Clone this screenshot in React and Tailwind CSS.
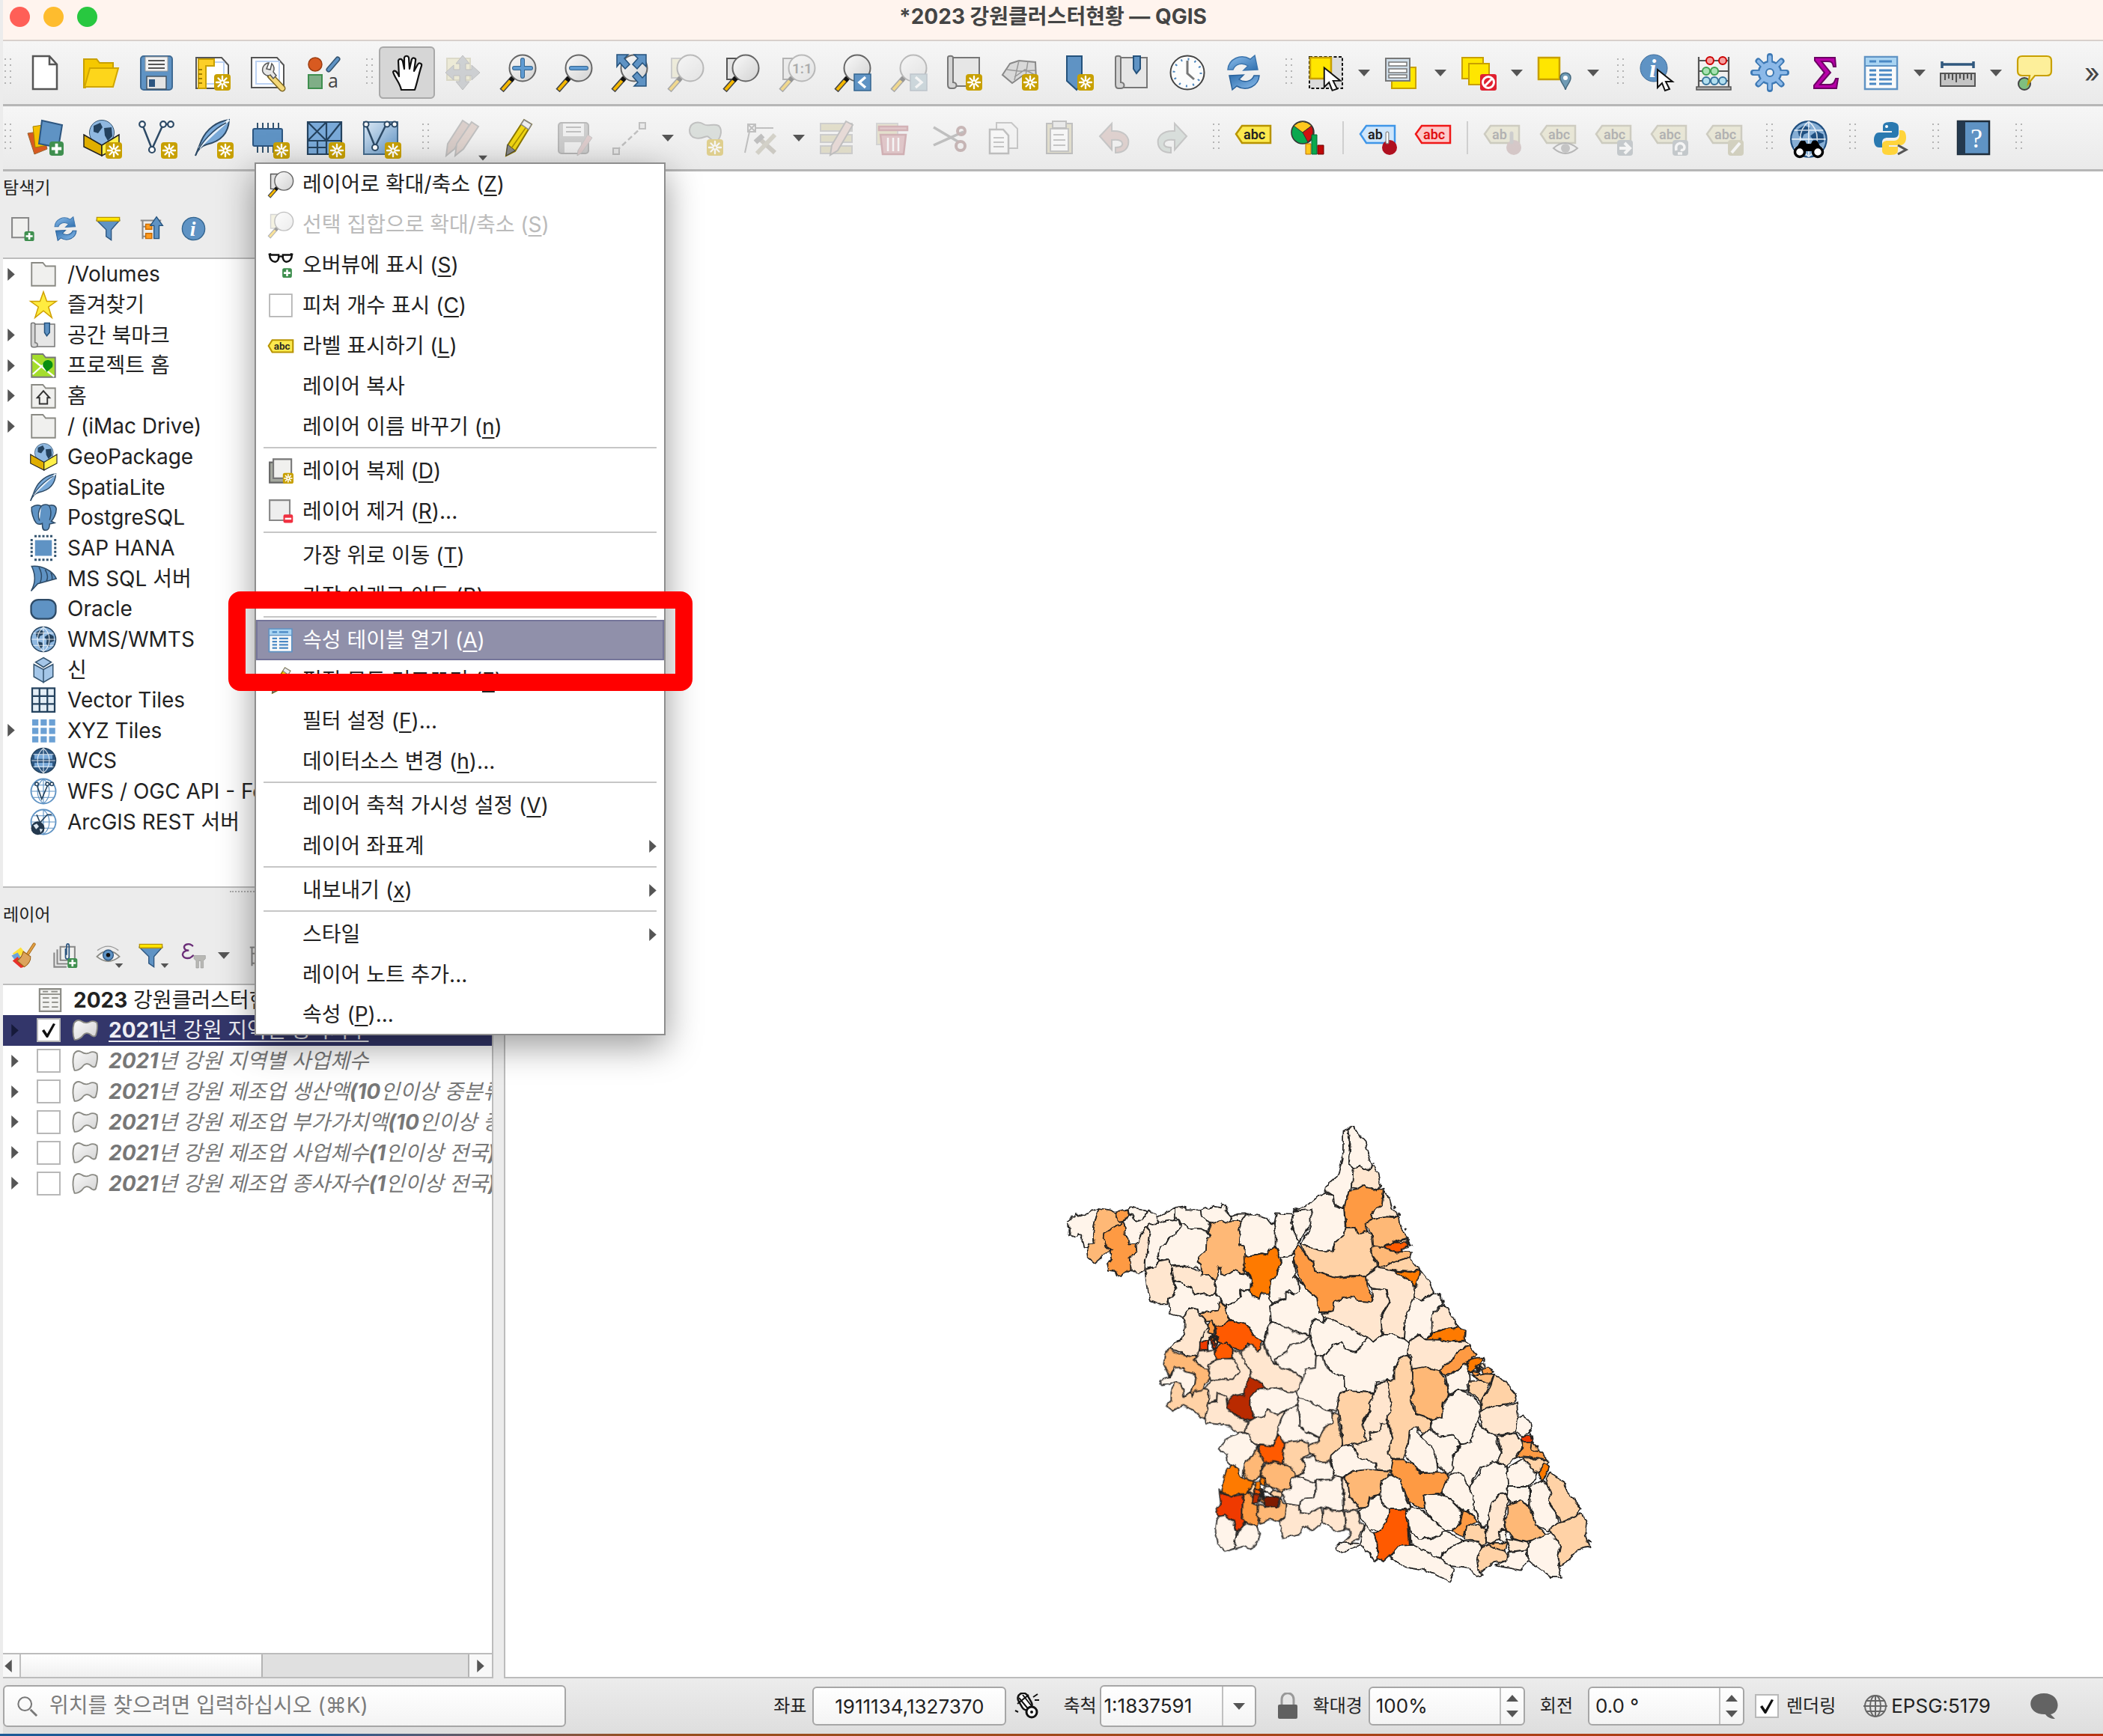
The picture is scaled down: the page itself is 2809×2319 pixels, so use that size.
import { Fragment, useState } from 'react';
import clsx from 'clsx';

const INK = '#222';

function Star({ x = 26, y = 26, s = 22 }) {
    return (
        <g transform={`translate(${x} ${y}) scale(${s / 22})`}>
            <rect width="22" height="22" rx="4" fill="#c8a000" />
            <path d="M11 3v16M3 11h16M5.500 5.500l11 11M16.500 5.500l-11 11" stroke="#fff" strokeWidth="2.400" strokeLinecap="round" />
            <circle cx="11" cy="11" r="1.600" fill="#c8a000" />
        </g>
    );
}

function Plus({ x = 28, y = 28, s = 20 }) {
    return (
        <g transform={`translate(${x} ${y}) scale(${s / 20})`}>
            <rect width="20" height="20" rx="4" fill="#3f8f4f" />
            <path d="M10 3v14M3 10h14" stroke="#fff" strokeWidth="4" />
        </g>
    );
}

function Lens({ children }) {
    return (
        <g>
            <path d="M17 31L2 48" stroke="#444" strokeWidth="7" />
            <path d="M14 34.500L3 47" stroke="#f5b800" strokeWidth="4" />
            <path d="M18 30l-4 5" stroke="#111" strokeWidth="6" />
            <circle cx="30" cy="18" r="17.500" fill="url(#glass)" stroke="#666" strokeWidth="2" />
            {children}
        </g>
    );
}

function Tag({ fill = '#fce94f', line = '#b89400', text = 'abc', color = '#222' }) {
    return (
        <g>
            <path d="M1 19L9 8h38v23H9z" fill={fill} stroke={line} strokeWidth="2.500" />
            <text x="11" y="26" fontSize="18" fontWeight="600" fontFamily="Roboto, sans-serif" fill={color}>{text}</text>
        </g>
    );
}

function Globe({ land = '#24425e', sea = '#8fb8e0' }) {
    return (
        <g>
            <circle cx="24" cy="24" r="22" fill={sea} stroke={land} strokeWidth="2" />
            <path d="M10 12l8-5 8 3-3 6-5 2-2 5-4-3zM26 20l8-6 8 4 1 9-7 3-2 8-5-6 1-6zM15 28l7 2 1 6-5 6-3-7z" fill={land} />
        </g>
    );
}

function Grid() {
    return <path d="M24 2v44M3 24h42M6 13h36M6 35h36M24 2c-14 11-14 33 0 44M24 2c14 11 14 33 0 44" fill="none" stroke="#fff" strokeWidth="1.500" opacity=".8" />;
}

const cursor = 'M22 20v24l6-6 4 10 6-2-5-10h9z';
const blueArrow = 'M3 20C4 6 20-2 33 6l6-5 4 19-19 1 6-6c-7-5-17-3-20 5z';

const ICONS = {
    newFile: <path d="M8 2h22l10 11v33H8zM30 2v11h10" fill="#fff" stroke="#555" strokeWidth="2.500" />,
    open: <><path d="M1 6h17l4 5h18v8H12L3 44H1z" fill="#f5c800" stroke="#c8a000" strokeWidth="2" /><path d="M9 18h38l-7 25H2z" fill="#fdd61b" stroke="#d0a600" strokeWidth="2" /></>,
    save: <><rect x="3" y="2" width="42" height="45" rx="4" fill="#5f93c4" stroke="#3f6a94" strokeWidth="2" /><path d="M9 3h30v19H9z" fill="#f3f3f3" stroke="#999" /><path d="M13 8h22M13 13h22M13 18h22" stroke="#555" strokeWidth="2" /><path d="M11 29h26v17H11z" fill="#e4e4e4" stroke="#456" strokeWidth="1.500" /><path d="M14 33h8v10h-8z" fill="#2d5680" /></>,
    layout: <><path d="M2 4h34l9 10v31H2z" fill="#fff" stroke="#555" strokeWidth="2" /><path d="M8 10h31v29H8z" fill="none" stroke="#bcd2f3" strokeWidth="2" /><path d="M5 6h21v9H15v30H5z" fill="#fdcf28" stroke="#c8a000" strokeWidth="2" /><path d="M5 20h5M5 26h5M5 32h5M5 38h5" stroke="#a27f00" strokeWidth="2" /><Star /></>,
    layoutManager: <><path d="M2 4h34l9 10v30H2z" fill="#fff" stroke="#555" strokeWidth="2" /><path d="M8 9h31v30H8z" fill="none" stroke="#bcd2f3" strokeWidth="2" /><path d="M27 28l16 17" stroke="#7a6420" strokeWidth="9" strokeLinecap="round" /><path d="M28 29l15 16" stroke="#f4d878" strokeWidth="6" strokeLinecap="round" /><path d="M25 11c-4 0-10 5-8 12 2 5 7 6 10 4l4 5 4-4-4-5c2-4 1-8-2-11l-2 8-5-1z" fill="#e6e6e6" stroke="#555" strokeWidth="1.500" /></>,
    style: <><ellipse cx="12" cy="13" rx="9" ry="9" fill="#d85a20" stroke="#9c3c10" strokeWidth="1.500" /><path d="M42 6L30 20" stroke="#33536f" strokeWidth="7" strokeLinecap="round" /><path d="M42 6L30 20" stroke="#5f93c4" strokeWidth="4" strokeLinecap="round" /><path d="M3 27h18v18H3z" fill="#7fae87" stroke="#3f8f4f" strokeWidth="2" /><text x="29" y="44" fontSize="25" fontFamily="Open Sans, sans-serif" fill="#444">a</text></>,
    hand: <path d="M15 46c-2-10-9-16-11-24 2-3 5-1 8 6L11 7c1-3 5-3 6 1l2 10V3c1-3 5-3 6 0l1 15 3-13c2-3 6-1 5 2l-2 14 5-9c2-3 6-1 5 2-3 8-5 20-9 32z" fill="#fff" stroke="#111" strokeWidth="2.200" strokeLinejoin="round" transform="translate(2 1)" />,
    panSelect: <><path d="M3 5h31v29H3z" fill="#e5dfae" stroke="#bbb68c" strokeWidth="2" /><path d="M24 1l9 11h-5v8h8v-6l11 10-11 10v-6h-8v8h5l-9 11-9-11h5v-8h-8v6L1 24l11-10v6h8v-8h-5z" fill="#9aa0a6" stroke="#777" /></>,
    zoomIn: <Lens><path d="M30 7v22M19 18h22" stroke="#33648f" strokeWidth="6" strokeLinecap="round" /><path d="M30 7v22M19 18h22" stroke="#5f9bd2" strokeWidth="4" strokeLinecap="round" /></Lens>,
    zoomOut: <Lens><path d="M20 18h20" stroke="#33648f" strokeWidth="6" strokeLinecap="round" /><path d="M20 18h20" stroke="#5f9bd2" strokeWidth="4" strokeLinecap="round" /></Lens>,
    zoomFull: <><Lens /><path d="M7 0h15l-5 5 7 8-6 6-7-8-4 5zM46 0v16l-5-5-7 8-6-6 7-8-5-5zM46 42H30l5-5-7-8 6-6 7 8 5-5z" fill="#5f93c4" stroke="#24527c" strokeWidth="1.500" /></>,
    zoomSel: <><path d="M5 5h26v26H5z" fill="#e6e1b8" stroke="#999" strokeWidth="2" /><Lens /></>,
    zoomLayer: <><path d="M5 5h26v28H5z" fill="#e2e2e2" stroke="#555" strokeWidth="2" /><Lens /></>,
    zoomNative: <><path d="M5 5h26v28H5z" fill="#e2e2e2" stroke="#555" strokeWidth="2" /><Lens><text x="17" y="25" fontSize="19" fontWeight="600" fontFamily="Roboto, sans-serif" fill="#444">1:1</text></Lens></>,
    zoomLast: <><Lens /><path d="M26 26h22v22H26z" fill="#5f93c4" stroke="#33648f" strokeWidth="1.500" /><path d="M41 30l-8 7 8 7" fill="none" stroke="#fff" strokeWidth="3.500" /></>,
    zoomNext: <><Lens /><path d="M26 26h22v22H26z" fill="#9ab4bf" stroke="#789" strokeWidth="1.500" /><path d="M33 30l8 7-8 7" fill="none" stroke="#fff" strokeWidth="3.500" /></>,
    newMap: <><path d="M8 4h36v38H8z" fill="#e6e6e6" stroke="#777" strokeWidth="2" /><path d="M2 4c0-3 7-3 7 0v33c6 0 6 8 0 8H6c-3 0-4-2-4-5z" fill="#d4d4d4" stroke="#777" strokeWidth="2" /><Star /></>,
    map3d: <><path d="M10 12l12-4 22 2 1 24-18-6-14 10-13-11z" fill="#d9d9d9" stroke="#888" strokeWidth="2" /><path d="M6 20l16 2 22-1M22 8l-6 26M34 9l-3 19M16 30l14-10 15 8" fill="none" stroke="#999" strokeWidth="1.500" /><Star /></>,
    bookmark: <><path d="M12 2h20v36l-7 9-13-12z" fill="#5f93c4" stroke="#24527c" strokeWidth="2" /><Star /></>,
    bookmarks: <><path d="M8 4h36v40H8z" fill="#e6e6e6" stroke="#777" strokeWidth="2" /><path d="M2 4c0-3 7-3 7 0v33c6 0 6 8 0 8H6c-3 0-4-2-4-5z" fill="#d4d4d4" stroke="#777" strokeWidth="2" /><path d="M26 2h9v17l-5 6-4-6z" fill="#5f93c4" stroke="#24527c" strokeWidth="2" /></>,
    clock: <><circle cx="24" cy="24" r="22.500" fill="#fcfcfc" stroke="#444" strokeWidth="2" /><circle cx="24" cy="24" r="18" fill="none" stroke="#4c86bd" strokeWidth="3" strokeDasharray="2 7.420" /><path d="M24 8v17l9 8" fill="none" stroke="#777" strokeWidth="3" /></>,
    refresh: <><path d={blueArrow} fill="url(#blue)" stroke="#3c75ad" strokeWidth="1.500" /><path d={blueArrow} transform="rotate(180 24 24)" fill="url(#blue)" stroke="#2a629b" strokeWidth="1.500" /></>,
    select: <><path d="M2 3h44v42H2z" fill="#dcdcdc" stroke="#111" strokeWidth="2" strokeDasharray="4 2.500" /><path d="M3 4h28v28H3z" fill="#ffe600" stroke="#c8a000" strokeWidth="2.500" /><path d={cursor} transform="translate(-2 -4) scale(1.080)" fill="#fff" stroke="#111" strokeWidth="1.800" /></>,
    selectValue: <><path d="M10 17h32v28H10z" fill="#ffe600" stroke="#c8a000" strokeWidth="2" /><path d="M2 5h32v30H2z" fill="#cfdde8" stroke="#777" strokeWidth="2" /><path d="M6 10h24v5H6zM6 19h24v5H6zM6 27h24v4H6z" fill="#fff" stroke="#777" strokeWidth="1.500" /></>,
    deselect: <><path d="M2 4h28v28H2z" fill="#ffe600" stroke="#c8a000" strokeWidth="2" /><path d="M11 12h27v28H11z" fill="#ffe600" stroke="#c8a000" strokeWidth="2" /><rect x="26" y="26" width="22" height="22" rx="3" fill="#e02030" /><circle cx="37" cy="37" r="7.500" fill="none" stroke="#fff" strokeWidth="3" /><path d="M42 32L32 42" stroke="#fff" strokeWidth="3" /></>,
    selectLocation: <><path d="M2 4h28v29H2z" fill="#ffe600" stroke="#c8a000" strokeWidth="2.500" /><path d="M38 47c-1-6-7-10-7-16 0-9 14-9 14 0 0 6-6 10-7 16z" fill="#6f9bb5" stroke="#44687e" strokeWidth="1.500" /><circle cx="38" cy="31" r="3" fill="#fff" /></>,
    identify: <><circle cx="19" cy="18" r="18" fill="#5f93c4" stroke="#3c6b99" /><text x="13" y="30" fontSize="33" fontWeight="700" fontStyle="italic" fontFamily="Liberation Serif, serif" fill="#fff">i</text><path d={cursor} transform="translate(2 0)" fill="#fff" stroke="#111" strokeWidth="2" /></>,
    abacus: <><path d="M4 3v40M44 3v40M4 8h40M4 22h40M4 35h40" stroke="#555" strokeWidth="2.200" /><path d="M1 43h46v4H1z" fill="#aaa" stroke="#555" strokeWidth="1.500" /><g fill="#f6a0a0" stroke="#c00" strokeWidth="2"><circle cx="19" cy="8" r="5" /><circle cx="36" cy="8" r="5" /></g><g fill="#a9e2b4" stroke="#3f9f4f" strokeWidth="2"><circle cx="14" cy="22" r="5" /><circle cx="25" cy="22" r="5" /></g><g fill="#b4e0f0" stroke="#37739c" strokeWidth="2"><circle cx="14" cy="35" r="5" /><circle cx="25" cy="35" r="5" /><circle cx="36" cy="35" r="5" /></g></>,
    gear: <><path d="M24 2v44M2 24h44M8.500 8.500l31 31M39.500 8.500l-31 31" stroke="#3c78b4" strokeWidth="8" strokeLinecap="round" /><circle cx="24" cy="24" r="15" fill="#8cb9e8" stroke="#3c78b4" strokeWidth="2.500" /><path d="M24 3v42M3 24h42M9 9l30 30M39 9L9 39" stroke="#8cb9e8" strokeWidth="4.500" strokeLinecap="round" /><circle cx="24" cy="24" r="5" fill="#f2f2f2" stroke="#3c78b4" strokeWidth="2" /></>,
    sigma: <path d="M9 4h27l1 12h-3c-1-6-3-7-8-7h-8l12 15-14 16h13c5 0 6-3 8-8h3l-2 13H8v-4l14-17L9 8z" fill="#b800a8" stroke="#6d0064" strokeWidth="2" />,
    table: <><path d="M2 3h43v43H2z" fill="#fafafa" stroke="#5f93c4" strokeWidth="2.500" /><path d="M3 4h41v10H3z" fill="#a9d4f2" /><path d="M2 15h43" stroke="#5f93c4" strokeWidth="2" /><path d="M8 9h9M21 9h17M8 21h9M21 21h17M8 27h9M21 27h17M8 33h9M21 33h17M8 39h9M21 39h17" stroke="#4a88c4" strokeWidth="3" /></>,
    ruler: <><path d="M3 9v9M45 9v9M3 13h42" stroke="#30587e" strokeWidth="3.500" /><path d="M1 25h46v17H1z" fill="#c4c4c4" stroke="#555" strokeWidth="2" /><path d="M7 26v8M12 26v6M17 26v8M22 26v11M27 26v6M32 26v8M37 26v6M42 26v8" stroke="#444" strokeWidth="1.800" /></>,
    tip: <><circle cx="11" cy="39" r="8" fill="#7fbf80" stroke="#444" strokeWidth="2" /><path d="M8 2h33q6 0 6 6v14q0 6-6 6H25l-9 11 2-11H8q-6 0-6-6V8q0-6 6-6z" fill="#fdef9a" stroke="#c8a000" strokeWidth="2.200" /></>,

    addLayer: <><path d="M1 18l20-3 6 24-17 7z" fill="#d85a20" stroke="#963" /><path d="M8 9l20-3 5 27-22 4z" fill="#f5c000" stroke="#a27f00" /><path d="M20 1l27 6-5 30-26-5z" fill="#5f93c4" stroke="#2d5680" strokeWidth="2" /><Plus x={30} y={29} s={19} /></>,
    geopackage: <><circle cx="25" cy="17" r="16.500" fill="#8fb8e0" stroke="#33536f" /><path d="M14 8l9-4 3 6-6 8-6-2zM28 11l10-1 1 12-6 6-4-7z" fill="#24425e" /><path d="M1 20l24 14v14L1 36z" fill="#e0ae00" stroke="#222" strokeWidth="1.500" /><path d="M48 20L25 34v14l23-12z" fill="#fff04a" stroke="#222" strokeWidth="1.500" /></>,
    vector: <><path d="M5 6l13 33L33 6h10" fill="none" stroke="#2d4a66" strokeWidth="2.500" /><g fill="#fff" stroke="#2d4a66" strokeWidth="2.200"><circle cx="5" cy="6" r="3.800" /><circle cx="33" cy="6" r="3.800" /><circle cx="43" cy="6" r="3.800" /><circle cx="18" cy="40" r="4" /></g></>,
    feather: <><path d="M46 0C30 2 16 12 9 28L1 48c3-9 8-13 15-15C30 30 45 22 46 0z" fill="#79a9d8" stroke="#2d4a66" strokeWidth="2" /><path d="M46 0C32 12 16 26 6 38" fill="none" stroke="#e5f0fa" strokeWidth="3" /><path d="M1 48C8 30 26 12 42 4" fill="none" stroke="#2d4a66" strokeWidth="1.500" /></>,
    chip: <><path d="M9 4v40M16 4v40M23 4v40M30 4v40M37 4v40" stroke="#33536f" strokeWidth="2" /><rect x="3" y="12" width="39" height="23" rx="2" fill="#5f93c4" stroke="#2d5680" strokeWidth="2" /></>,
    mesh: <path d="M2 3h45v43H2zM2 28h45M27 3v43M2 3l25 25M27 3L2 28M47 3L27 28M15 28v18M2 37h25" fill="#79a9d8" stroke="#24425e" strokeWidth="2.200" />,
    vgrid: <><path d="M2 3h45v43H2z" fill="url(#blueSoft)" stroke="#456b8c" strokeWidth="2" /><path d="M4 4l13 32L32 6h12" fill="none" stroke="#2d4a66" strokeWidth="2.500" /><g fill="#fff" stroke="#2d4a66" strokeWidth="2"><circle cx="5" cy="6" r="3.500" /><circle cx="33" cy="6" r="3.500" /><circle cx="43" cy="6" r="3.500" /><circle cx="17" cy="37" r="4" /></g></>,
    pencil: <><path d="M32 0l10 6-22 36-12 6 2-14z" fill="#f0d613" stroke="#8a7500" strokeWidth="2" /><path d="M32 0l10 6-4 7-10-7z" fill="#eee" stroke="#888" strokeWidth="1.500" /><path d="M10 33l10 8-12 7z" fill="#888" stroke="#444" /><path d="M34 11L15 38" stroke="#a68c00" strokeWidth="1.500" /></>,
    pencils: <><path d="M24 1l9 6-20 32-11 9 2-16z" fill="#b79a90" stroke="#777" strokeWidth="2" /><path d="M36 3l9 6-20 30-11 9 2-16z" fill="#c5a79b" stroke="#777" strokeWidth="2" /></>,
    saveEdits: <><rect x="3" y="4" width="40" height="41" rx="4" fill="#9a9a9a" stroke="#666" strokeWidth="2" /><path d="M9 5h28v17H9zM11 30h22v14H11z" fill="#eee" /><path d="M13 10h20M13 16h20" stroke="#777" strokeWidth="2" /><path d="M42 20l6 4-14 20-6 4 1-7z" fill="#c49a9a" stroke="#888" /></>,
    line: <><path d="M6 42L42 8" stroke="#777" strokeWidth="2.500" strokeDasharray="7 4" /><path d="M2 38h8v8H2zM37 4h8v8h-8z" fill="#ddd" stroke="#777" strokeWidth="2" /></>,
    polygon: <><path d="M3 14C4 2 16 2 22 6s12-2 20 2c6 6 2 22-6 20s-6-8-13-5S3 26 3 14z" fill="#b8c4bb" stroke="#777" strokeWidth="2" /><Star /></>,
    tools: <><path d="M6 6h10v10H6zM6 6l10 10M16 6L6 16M16 11h24M8 16L2 44" fill="none" stroke="#777" strokeWidth="2" /><path d="M20 24l22 20" stroke="#9a9484" strokeWidth="6" /><path d="M42 20L18 45" stroke="#aaa58f" strokeWidth="6" /><path d="M16 30l10-9" stroke="#777" strokeWidth="7" /></>,
    multiEdit: <><path d="M2 5h42v10H2zM2 20h42v10H2zM2 35h42v10H2z" fill="#c8c090" stroke="#999" strokeWidth="2" /><path d="M36 2l9 5-20 34-10 6 2-13z" fill="#d8b8b0" stroke="#777" strokeWidth="2" /></>,
    trash: <><path d="M3 5h28v28H3z" fill="#d2c99a" stroke="#aaa" strokeWidth="2" /><path d="M8 20h34l-3 26H11zM6 9h38v5H6z" fill="#c98a90" stroke="#a5555f" strokeWidth="2.500" /><path d="M18 24v18M25 24v18M32 24v18" stroke="#fff" strokeWidth="2.500" /></>,
    cut: <><path d="M4 10l34 20M4 34L44 16" stroke="#777" strokeWidth="3.500" /><g fill="none" stroke="#8a6060" strokeWidth="4"><circle cx="41" cy="15" r="5" /><circle cx="40" cy="35" r="6" /></g></>,
    copy: <><path d="M14 4h20l8 8v26H14z" fill="#f4f4f4" stroke="#888" strokeWidth="2" /><path d="M5 13h18l7 8v24H5z" fill="#fff" stroke="#777" strokeWidth="2.500" /><path d="M10 24h14M10 30h14M10 36h14" stroke="#888" strokeWidth="2" /></>,
    paste: <><path d="M7 5h34v40H7z" fill="#ccc39a" stroke="#777" strokeWidth="2" /><path d="M12 12h24v30H12z" fill="#fff" stroke="#888" strokeWidth="2" /><path d="M15 2h18v9H15z" fill="#ddd" stroke="#777" strokeWidth="2" /><path d="M16 20h14M16 27h16M16 34h16" stroke="#888" strokeWidth="2" /></>,
    undo: <path d="M3 22L19 5v10c17-1 24 8 22 18-2 8-8 11-17 11v-7c8 0 10-3 9-6-1-4-6-5-14-4v13z" fill="#c4a29c" stroke="#888" strokeWidth="2" />,
    redo: <path d="M45 22L29 5v10C12 14 5 23 7 33c2 8 8 11 17 11v-7c-8 0-10-3-9-6 1-4 6-5 14-4v13z" fill="#b5c4bc" stroke="#888" strokeWidth="2" />,
    label: <Tag />,
    diagram: <><circle cx="16" cy="17" r="15" fill="#0aa84f" stroke="#333" strokeWidth="1.500" /><path d="M16 17L4 8Q16-3 28 8z" fill="#ffc81e" stroke="#333" /><path d="M16 17L28 8q6 12-5 22z" fill="#d01010" stroke="#333" /><path d="M20 32h7v14h-7z" fill="#ffc81e" stroke="#c07000" /><path d="M28 20h7v26h-7z" fill="#0aa84f" stroke="#063" /><path d="M36 34h8v12h-8z" fill="#c00808" stroke="#600" /></>,
    pinLabel: <><Tag fill="#cfe6fb" line="#3f96e8" text="ab" /><circle cx="40" cy="37" r="10" fill="#b01020" /><path d="M37 18v12" stroke="#888" strokeWidth="5" strokeLinecap="round" /><path d="M37 18v12" stroke="#fff" strokeWidth="2.500" strokeLinecap="round" /></>,
    redLabel: <Tag fill="#fccaca" line="#f01818" color="#e01010" />,
    tagPin: <><Tag fill="#dcd8b0" line="#9a967a" text="ab" color="#555" /><circle cx="40" cy="37" r="10" fill="#b08f8f" /><path d="M37 18v12" stroke="#999" strokeWidth="5" strokeLinecap="round" /></>,
    tagEye: <><Tag fill="#dcd8b0" line="#9a967a" color="#555" /><path d="M18 38q15-14 32 0-16 14-32 0z" fill="#eee" stroke="#666" strokeWidth="2" /><circle cx="34" cy="38" r="6" fill="#888" /></>,
    tagMove: <><Tag fill="#dcd8b0" line="#9a967a" color="#555" /><rect x="29" y="27" width="21" height="21" rx="4" fill="#879299" /><path d="M32 38h13M39 31l7 7-7 7" fill="none" stroke="#fff" strokeWidth="4" /></>,
    tagRotate: <><Tag fill="#dcd8b0" line="#9a967a" color="#555" /><rect x="29" y="27" width="21" height="21" rx="4" fill="#879299" /><path d="M34 41c-3-12 11-12 11-4 0 3-3 4-5 3M36 45l6 0" fill="none" stroke="#fff" strokeWidth="3.500" /></>,
    tagEdit: <><Tag fill="#dcd8b0" line="#9a967a" color="#555" /><rect x="29" y="27" width="21" height="21" rx="4" fill="#a8a37a" /><path d="M45 31L34 44" stroke="#fff" strokeWidth="4" /></>,
    metasearch: <><g transform="scale(1.080)"><Globe sea="#86aed4" land="#1f4f80" /><Grid /></g><path d="M15 28h6l2 4h6l2-4h6l8 14H7z" fill="#000" /><g fill="#fff" stroke="#000" strokeWidth="3.500"><circle cx="14" cy="43" r="6.500" /><circle cx="38" cy="43" r="6.500" /></g></>,
    python: <><path d="M24 3c-9 0-10 3-10 7v5h12v2H9c-5 0-7 5-7 10s2 10 7 10h4v-7c0-4 3-6 7-6h9c4 0 6-3 6-6v-8c0-5-4-7-11-7z" fill="#2a79b0" /><circle cx="19" cy="9" r="2" fill="#fff" /><path d="M24 47c9 0 10-3 10-7v-4H22v-2h15c5 0 8-4 8-10s-2-10-6-10h-3v7c0 4-3 7-7 7h-9c-4 0-7 2-7 6v7c0 5 4 6 11 6z" fill="#ffd43b" /><path d="M34 34l11 6-11 6" fill="none" stroke="#555" strokeWidth="3" /></>,
    help: <><path d="M3 2h42v44H3z" fill="#5f93c4" stroke="#1e2c3a" strokeWidth="2.500" /><path d="M3 2h10v44H3z" fill="#24394e" /><text x="20" y="37" fontSize="36" fontFamily="Liberation Serif, serif" fill="#fff">?</text></>,

    addSquare: <><path d="M3 3h32v38H3z" fill="#f0f0ee" stroke="#888" strokeWidth="3" /><Plus x={27} y={29} s={19} /></>,
    removeSquare: <><path d="M3 3h38v38H3z" fill="#eee" stroke="#888" strokeWidth="3" /><rect x="29" y="30" width="18" height="16" rx="3" fill="#f03040" /><path d="M32 38h12" stroke="#fff" strokeWidth="3.500" /></>,
    duplicate: <><path d="M3 8h34v38H3z" fill="#a5a99f" stroke="#666" strokeWidth="3" /><path d="M10 2h34v36H10z" fill="#f0f0ee" stroke="#777" strokeWidth="3" /><Star x={28} y={28} s={20} /></>,
    filter: <><path d="M2 8h44L30 26v20l-10-7V26z" fill="#5f93c4" stroke="#2d5680" strokeWidth="2" /><path d="M2 2h44v7H2z" fill="#ffe600" stroke="#b89400" strokeWidth="2" /></>,
    collapse: <><path d="M4 8h40M8 8v36M8 20h6M8 39h6" stroke="#888" strokeWidth="3" /><path d="M14 15h12v10H14zM14 33h12v10H14z" fill="#ff9a1e" stroke="#c66a00" strokeWidth="2" /><path d="M35 1l12 17h-7v25H30V18h-7z" fill="#5f93c4" stroke="#24527c" strokeWidth="2" /></>,
    info: <><circle cx="24" cy="24" r="22" fill="#5f93c4" stroke="#33648f" strokeWidth="2" /><text x="17" y="38" fontSize="40" fontStyle="italic" fontWeight="700" fontFamily="Liberation Serif, serif" fill="#fff">i</text></>,
    folder: <path d="M3 4h20l5 6h17v35H3z" fill="#f0f0ee" stroke="#8a8a84" strokeWidth="2.500" />,
    star: <path d="M24 1l6 17h17L33 28l6 19-15-12L9 47l6-19L1 18h17z" fill="#ffec40" stroke="#cfa000" strokeWidth="2" />,
    projectHome: <><path d="M3 4h20l5 6h17v35H3z" fill="#a5dd2c" stroke="#777" strokeWidth="2.500" /><path d="M5 14l38 30M5 40l20-18" stroke="#fff" strokeWidth="3" /><path d="M30 36c-2-5-8-9-7-14s6-8 11-7 8 6 6 12z" fill="#0a8f12" /></>,
    home: <><path d="M3 4h20l5 6h17v35H3z" fill="#f0f0ee" stroke="#8a8a84" strokeWidth="2.500" /><path d="M24 15L13 27h4v11h14V27h4z" fill="none" stroke="#333" strokeWidth="2.500" /></>,
    elephant: <path d="M3 6C10 1 16 2 20 4c4-3 10-3 14-1 6-2 12 0 13 6 0 9-5 18-9 22l6 3-9 2c0 8-3 12-8 11-5 0-5-6-5-12-4 2-8 2-11-1C6 28 2 14 3 6zM20 4c-5 8-6 18-3 26M34 3c4 7 4 17 1 26" fill="#5f93c4" stroke="#2d4a66" strokeWidth="2" />,
    hana: <><path d="M9 10h30v28H9z" fill="#5f93c4" /><path d="M8 3h32M8 45h32M3 8v32M45 8v32" stroke="#33536f" strokeWidth="4" strokeDasharray="4 3" /></>,
    mssql: <path d="M3 2c18-2 38 8 44 22L14 33 2 46c8-14 8-30 1-44zM16 4c6 10 6 18 2 28M27 8c5 8 5 16 2 21M37 13c3 5 3 9 2 13" fill="#5f93c4" stroke="#2d4a66" strokeWidth="2" />,
    oracle: <rect x="2" y="8" width="44" height="34" rx="13" fill="#5f93c4" stroke="#2d4a66" strokeWidth="3" />,
    wms: <><Globe /><Grid /></>,
    cube: <><path d="M24 2l14 8-14 9-14-9zM7 14l17 9v23L7 36zM41 14l-17 9v23l17-10z" fill="#a4c6e8" stroke="#33536f" strokeWidth="2" /></>,
    tiles: <path d="M4 3h40v42H4zM17 3v42M31 3v42M4 17h40M4 31h40" fill="#e4eef6" stroke="#24425e" strokeWidth="3" />,
    xyz: <path d="M4 4h11v11H4zM19 4h11v11H19zM34 4h11v11H34zM4 19h11v11H4zM19 19h11v11H19zM34 19h11v11H34zM4 34h11v11H4zM19 34h11v11H19zM34 34h11v11H34z" fill="#6ba0d4" />,
    wcs: <><circle cx="24" cy="24" r="22" fill="#2d5680" stroke="#24425e" strokeWidth="2" /><path d="M8 13h32v8H8zM8 28h32v8H8z" fill="#79a9d8" /><Grid /></>,
    wfs: <><circle cx="24" cy="24" r="22" fill="#fff" stroke="#5f93c4" strokeWidth="2.500" /><path d="M24 2v44M3 24h42M6 13h36M6 35h36M24 2c-14 11-14 33 0 44M24 2c14 11 14 33 0 44" fill="none" stroke="#5f93c4" strokeWidth="1.500" /><path d="M12 12l9 26L32 12h7" fill="none" stroke="#24425e" strokeWidth="2.200" /><g fill="#fff" stroke="#24425e" strokeWidth="2"><circle cx="12" cy="11" r="3" /><circle cx="31" cy="11" r="3" /><circle cx="39" cy="11" r="3" /></g></>,
    arcgis: <><circle cx="24" cy="24" r="22" fill="#fff" stroke="#5f93c4" strokeWidth="2.500" /><path d="M24 2v44M3 24h42M6 13h36M6 35h36M24 2c14 11 14 33 0 44" fill="none" stroke="#5f93c4" strokeWidth="1.500" /><path d="M12 11l6 14L31 11h8" fill="none" stroke="#24425e" strokeWidth="2.200" /><circle cx="14" cy="35" r="12" fill="#24394e" /><path d="M6 30l6-3 4 5-5 5zM17 36l6 1-4 6z" fill="#dde8f0" /></>,

    brush: <><path d="M4 20L20 8l8 10-14 10z" fill="#ffe23a" /><path d="M2 24l12-6 6 10-10 7z" fill="#6aa2dc" /><path d="M4 34l10-8 12 20-6 2z" fill="#e8302a" /><path d="M46 2l-13 20" stroke="#a8691a" strokeWidth="6" strokeLinecap="round" /><path d="M46 2l-13 20" stroke="#e0a044" strokeWidth="3.500" strokeLinecap="round" /><path d="M25 16l14 10c1 8-5 16-12 20L13 34c6-4 10-10 12-18z" fill="#dca35c" stroke="#9a5f14" strokeWidth="1.500" /></>,
    addGroup: <><path d="M2 18v28h24M8 12v28h24" fill="none" stroke="#888" strokeWidth="3" /><path d="M14 7h28v26H14z" fill="#f0f0ee" stroke="#888" strokeWidth="3" /><path d="M24 10v17c0 5 7 5 7 0V5c0-5-5-5-5 0v18" fill="none" stroke="#2d5680" strokeWidth="2.500" /><Plus x={28} y={29} s={19} /></>,
    eye: <><path d="M2 26Q24 4 46 26 24 44 2 26z" fill="#f2f2f2" stroke="#8a8a84" strokeWidth="2.500" /><path d="M3 14Q24-2 44 14" fill="none" stroke="#999" strokeWidth="2" /><circle cx="24" cy="23" r="10" fill="#5f93c4" stroke="#2d5680" strokeWidth="2" /><circle cx="24" cy="23" r="4" fill="#111" /></>,
    epsilon: <><path d="M22 5C16-1 4 2 6 9c1 4 5 5 9 5C8 14 2 17 3 23c2 8 14 8 20 1" fill="none" stroke="#6a2d77" strokeWidth="3.500" strokeLinecap="round" /><path d="M25 24h22v6l-4 4v14h-5V34h-4v14h-5V34l-4-4z" fill="#b8b8b4" stroke="#999" /></>,
    glasses: <><path d="M1 4l5-1M47 4l-5-1M20 9q4-3 8 0" stroke="#111" strokeWidth="3" fill="none" /><path d="M3 5h17c1 8-2 13-7 13S3 13 3 5zM28 5h17c0 8-5 13-10 13s-8-5-7-13z" fill="none" stroke="#111" strokeWidth="3.500" /><Plus x={27} y={30} s={18} /></>,
    square: <path d="M3 3h42v42H3z" fill="#fff" stroke="#b4b4b4" strokeWidth="2.500" />,
    smallTag: <><path d="M1 24l7-11h39v23H8z" fill="#fce94f" stroke="#b89400" strokeWidth="3" /><text x="11" y="31" fontSize="19" fontWeight="600" fontFamily="Roboto, sans-serif" fill="#222">abc</text></>,
    group: <><path d="M4 3h40v42H4z" fill="#f2f2f0" stroke="#8a8a84" strokeWidth="3" /><path d="M4 13h40M10 8h10M26 8h12M10 20h12M27 20h12M10 28h12M27 28h12M10 37h12M27 37h12" stroke="#8a8a84" strokeWidth="2.500" /></>,
    shape: <path d="M5 12Q10 4 18 8 25 13 32 10 40 6 46 11 48 20 44 33 42 37 37 34 27 24 19 36 12 42 6 41 1 28 5 12z" fill="url(#glass)" stroke="#8a8a84" strokeWidth="2.500" />,
};

function Icon({ name, className }) {
    return (
        <svg viewBox="0 0 48 48" aria-hidden="true" className={clsx('shrink-0 overflow-visible', className)} fill="none">
            {ICONS[name]}
        </svg>
    );
}

function Down({ className }) {
    return (
        <svg viewBox="0 0 16 9" aria-hidden="true" className={clsx('shrink-0', className)}>
            <path d="M0 0h16L8 9z" fill="#555" />
        </svg>
    );
}

function Handle({ first }) {
    return (
        <div className={clsx('flex shrink-0 justify-end pr-[7px]', first ? 'w-[19px]' : 'w-9')}>
            <svg viewBox="0 0 10 40" className="h-10 w-2.5" aria-hidden="true">
                <path d="M1 1v40M8 1v40" stroke="#b4b4b4" strokeWidth="2" strokeDasharray="2 6" />
            </svg>
        </div>
    );
}

// Tools: [icon, label, flags] - d: disabled, m: drop-down, n: small drop-down, s: star badge, p: pressed
const mainTools = [
    { width: 'w-[447px]', tools: [['newFile', '새 프로젝트'], ['open', '열기'], ['save', '저장'], ['layout', '새 인쇄 레이아웃'], ['layoutManager', '레이아웃 관리자'], ['style', '스타일 관리자']] },
    { width: 'w-[1192px]', tools: [['hand', '이동', 'p'], ['panSelect', '선택으로 이동', 'd'], ['zoomIn', '확대'], ['zoomOut', '축소'], ['zoomFull', '전체 보기'], ['zoomSel', '선택으로 확대', 'd'], ['zoomLayer', '레이어로 확대'], ['zoomNative', '원본 해상도', 'd'], ['zoomLast', '이전 보기'], ['zoomNext', '다음 보기', 'd'], ['newMap', '새 지도 뷰'], ['map3d', '새 3D 뷰'], ['bookmark', '새 북마크'], ['bookmarks', '북마크'], ['clock', '시간 제어기'], ['refresh', '새로고침']] },
    { width: 'w-[407px]', tools: [['select', '피처 선택', 'm'], ['selectValue', '값으로 선택', 'm'], ['deselect', '선택 해제', 'm'], ['selectLocation', '위치로 선택', 'm']] },
    { width: 'w-[577px]', tools: [['identify', '식별'], ['abacus', '필드 계산기'], ['gear', '툴박스'], ['sigma', '통계'], ['table', '속성 테이블', 'm'], ['ruler', '측정', 'm'], ['tip', '지도 팁']] },
];

const layerTools = [
    { width: 'w-[522px]', tools: [['addLayer', '레이어 추가'], ['geopackage', '새 GeoPackage', 's'], ['vector', '새 Shapefile', 's'], ['feather', '새 SpatiaLite', 's'], ['chip', '새 임시 레이어', 's'], ['mesh', '새 메시', 's'], ['vgrid', '새 GPX', 's']] },
    { width: 'w-[1020px]', tools: [['pencils', '현재 편집', 'dn'], ['pencil', '편집 전환'], ['saveEdits', '편집 저장', 'd'], ['line', '선 디지타이징', 'dm'], ['polygon', '폴리곤 추가', 'd'], ['tools', '꼭짓점 도구', 'dm'], ['multiEdit', '다중 편집', 'd'], ['trash', '삭제', 'd'], ['cut', '잘라내기', 'd'], ['copy', '복사', 'd'], ['paste', '붙여넣기', 'd'], ['undo', '실행 취소', 'd'], ['redo', '다시 실행', 'd']] },
    { width: 'w-[703px]', tools: [['label', '라벨'], ['diagram', '다이어그램'], null, ['pinLabel', '고정 라벨 강조'], ['redLabel', '미배치 라벨'], null, ['tagPin', '라벨 고정', 'd'], ['tagEye', '라벨 보이기', 'd'], ['tagMove', '라벨 이동', 'd'], ['tagRotate', '라벨 회전', 'd'], ['tagEdit', '라벨 변경', 'd']] },
    { width: 'w-[75px]', tools: [['metasearch', '메타 검색']] },
    { width: 'w-[75px]', tools: [['python', '파이썬 콘솔']] },
    { width: 'w-[75px]', tools: [['help', '도움말']] },
];

function ToolButton({ icon, label, flags = '' }) {
    const disabled = flags.includes('d');
    return (
        <>
            <button
                type="button"
                aria-label={label}
                disabled={disabled}
                className={clsx(
                    'relative flex h-[70px] min-w-0 flex-1 items-center justify-center',
                    flags.includes('p') && 'rounded-md bg-[#d6d6d6] ring-2 ring-[#a9a9a9] ring-inset'
                )}
            >
                <span className={clsx('relative', disabled && 'opacity-40')}>
                    <Icon name={icon} className="size-12" />
                    {flags.includes('s') && (
                        <svg viewBox="0 0 22 22" className="absolute -right-1 -bottom-1 size-[22px]" aria-hidden="true"><Star x={0} y={0} /></svg>
                    )}
                </span>
                {flags.includes('n') && <Down className="absolute right-1 bottom-1 h-2 w-3" />}
            </button>
            {flags.includes('m') && (
                <button type="button" aria-label={`${label} 메뉴`} className="flex h-[70px] w-[27px] shrink-0 items-center justify-center">
                    <Down className="h-[9px] w-4" />
                </button>
            )}
        </>
    );
}

function Toolbar({ groups, more, trailing }) {
    return (
        <div role="toolbar" className="flex h-[87px] shrink-0 items-center border-b-3 border-[#b6b6b6] bg-linear-to-b from-[#f6f6f6] to-[#eaeaea]">
            {groups.map((group, i) => (
                <Fragment key={i}>
                    <Handle first={i === 0} />
                    <div className={clsx('flex shrink-0 items-center', group.width)}>
                        {group.tools.map((tool, j) => tool
                            ? <ToolButton key={j} icon={tool[0]} label={tool[1]} flags={tool[2]} />
                            : <span key={j} className="mx-2 h-11 w-0.5 shrink-0 bg-[#cfcfcf]" />)}
                    </div>
                </Fragment>
            ))}
            {trailing && <Handle />}
            {more && <button type="button" aria-label="더 보기" className="mr-1 ml-auto text-4xl leading-8 text-[#444]">»</button>}
        </div>
    );
}

const sources = [
    ['folder', '/Volumes', true],
    ['star', '즐겨찾기'],
    ['bookmarks', '공간 북마크', true],
    ['projectHome', '프로젝트 홈', true],
    ['home', '홈', true],
    ['folder', '/ (iMac Drive)', true],
    ['geopackage', 'GeoPackage'],
    ['feather', 'SpatiaLite'],
    ['elephant', 'PostgreSQL'],
    ['hana', 'SAP HANA'],
    ['mssql', 'MS SQL 서버'],
    ['oracle', 'Oracle'],
    ['wms', 'WMS/WMTS'],
    ['cube', '신'],
    ['tiles', 'Vector Tiles'],
    ['xyz', 'XYZ Tiles', true],
    ['wcs', 'WCS'],
    ['wfs', 'WFS / OGC API - Features'],
    ['arcgis', 'ArcGIS REST 서버'],
];

const initialLayers = [
    { name: '2021년 강원 지역별 종사자수', visible: true },
    { name: '2021년 강원 지역별 사업체수' },
    { name: '2021년 강원 제조업 생산액(10인이상 중분류)' },
    { name: '2021년 강원 제조업 부가가치액(10인이상 중분류)' },
    { name: '2021년 강원 제조업 사업체수(1인이상 전국)' },
    { name: '2021년 강원 제조업 종사자수(1인이상 전국)' },
];

// Hangul stays in the regular weight, digits and punctuation are bold
function MixedText({ text }) {
    return text.split(/([가-힣 ]+)/).map((part, i) => (
        <span key={i} className={i % 2 ? 'font-normal' : 'font-bold'}>{part}</span>
    ));
}

function Expander({ shown, dark }) {
    return (
        <svg viewBox="0 0 10 18" className={clsx('h-[17px] w-2.5 shrink-0', !shown && 'invisible')} aria-hidden="true">
            <path d="M0 0l10 9L0 18z" fill={dark ? '#161a3a' : '#555'} />
        </svg>
    );
}

function CheckBox({ id, checked, onChange }) {
    return (
        <span className="grid size-8 shrink-0">
            <input
                id={id}
                type="checkbox"
                checked={checked}
                onChange={onChange}
                className="size-8 appearance-none border-2 border-[#b8b8b8] bg-white [grid-area:1/1]"
            />
            {checked && (
                <svg viewBox="0 0 32 32" className="pointer-events-none size-8 [grid-area:1/1]" aria-hidden="true">
                    <path d="M7 17l3-2 4 6L22 7l3 1-10 18h-2z" fill="#111" />
                </svg>
            )}
        </span>
    );
}

function BrowserPanel() {
    const tools = [['addSquare', '레이어 추가'], ['refresh', '새로고침'], ['filter', '필터'], ['collapse', '모두 접기'], ['info', '속성 보기']];
    return (
        <section className="flex h-[957px] shrink-0 flex-col">
            <h2 className="pt-1.5 text-[23px] leading-8">탐색기</h2>
            <div className="flex flex-1 items-center gap-6 pl-2.5">
                {tools.map(([icon, label]) => (
                    <button key={icon} type="button" aria-label={label}><Icon name={icon} className="size-[33px]" /></button>
                ))}
            </div>
            <div className="h-[842px] overflow-hidden border-y-2 border-[#bcbcbc] bg-white">
                <ul className="grid h-[772px] auto-rows-fr">
                    {sources.map(([icon, name, children]) => (
                        <li key={name} className="flex items-center pl-1.5 whitespace-nowrap">
                            <Expander shown={children} />
                            <Icon name={icon} className="mr-3.5 ml-5 size-9" />
                            <span>{name}</span>
                        </li>
                    ))}
                </ul>
            </div>
        </section>
    );
}

function LayersPanel() {
    const [layers, setLayers] = useState(initialLayers);

    const toggle = (index) => {
        setLayers(layers.map((layer, i) => (i === index ? { ...layer, visible: !layer.visible } : layer)));
    };

    return (
        <section className="flex min-h-0 flex-1 flex-col">
            <div className="flex h-3 items-start justify-center">
                <span className="mt-1 w-12 border-t-2 border-dotted border-[#aaa]" />
            </div>
            <h2 className="pt-2 text-[23px] leading-8">레이어</h2>
            <div className="flex h-[76px] items-center gap-6 pl-2.5">
                <button type="button" aria-label="스타일"><Icon name="brush" className="size-[33px]" /></button>
                <button type="button" aria-label="그룹 추가"><Icon name="addGroup" className="size-[33px]" /></button>
                <button type="button" aria-label="지도 테마" className="relative"><Icon name="eye" className="size-[33px]" /><Down className="absolute -right-1 bottom-0 h-1.5 w-3" /></button>
                <button type="button" aria-label="범례 필터" className="relative"><Icon name="filter" className="size-[33px]" /><Down className="absolute -right-2 bottom-0 h-1.5 w-3" /></button>
                <button type="button" aria-label="표현식 필터" className="flex items-center gap-4"><Icon name="epsilon" className="size-[33px]" /><Down className="h-[9px] w-4" /></button>
                <button type="button" aria-label="모두 펼치기"><Icon name="collapse" className="size-[33px]" /></button>
            </div>
            <div className="flex min-h-0 flex-1 flex-col border-y-2 border-[#bcbcbc] bg-white">
                <div className="flex h-10 shrink-0 items-center pl-[46px] whitespace-nowrap">
                    <Icon name="group" className="mr-3.5 size-[34px]" />
                    <span><MixedText text="2023 강원클러스터현황" /></span>
                </div>
                <ul className="grid h-[245px] shrink-0 auto-rows-fr">
                    {layers.map((layer, i) => (
                        <li key={layer.name} className={clsx('flex min-w-0 items-center overflow-hidden pl-[11px]', i === 0 && 'bg-[#33366a]')}>
                            <Expander shown dark={i === 0} />
                            <span className="ml-6 flex"><CheckBox id={`layer-${i}`} checked={!!layer.visible} onChange={() => toggle(i)} /></span>
                            <Icon name="shape" className="mr-3.5 ml-3.5 size-9" />
                            <label
                                htmlFor={`layer-${i}`}
                                className={clsx('whitespace-nowrap', i === 0 ? 'text-[#eeeef4] underline decoration-2 underline-offset-4' : 'text-[#777] italic')}
                            >
                                <MixedText text={layer.name} />
                            </label>
                        </li>
                    ))}
                </ul>
                <div className="mt-auto flex h-8 shrink-0 border-t-2 border-[#bcbcbc]">
                    <button type="button" aria-label="왼쪽으로" className="flex w-6 items-center border-r-2 border-[#c0c0c0] bg-[#f8f8f8] pl-0.5">
                        <svg viewBox="0 0 10 18" className="h-[17px] w-2.5" aria-hidden="true"><path d="M10 0L0 9l10 9z" fill="#555" /></svg>
                    </button>
                    <span className="w-[323px] border-r-2 border-[#b4b4b4] bg-linear-to-b from-white to-[#f0f0f0]" />
                    <span className="flex-1 bg-[#e0e0e0]" />
                    <button type="button" aria-label="오른쪽으로" className="flex w-8 items-center justify-center border-l-2 border-[#b4b4b4] bg-[#f8f8f8]"><Expander shown /></button>
                </div>
            </div>
        </section>
    );
}

const FILLS = ['#fff4ea', '#ffe6cf', '#ffd2a6', '#feb876', '#fe9a43', '#fe7a00', '#ff5a00', '#ef3a00', '#b92a00', '#7f1c00'];

// Townships, traced in three sheets. Each entry is [class, outline]
const sheets = [
    {
        transform: 'translate(1400 1480) scale(0.33333)',
        areas: [
            [0, '72,462 90,440 104,440 108,424 122,436 160,424 200,405 190,440 182,470 178,500 182,545 160,548 154,572 142,565 138,540 130,535 130,512 118,510 104,520 84,515 80,480'],
            [3, '200,405 245,412 268,422 270,440 280,458 300,458 250,490 220,510 218,525 230,555 250,572 235,580 215,595 184,628 155,602 152,572 160,548 182,545 178,500 182,470 190,440'],
            [4, '268,422 298,414 314,410 316,430 300,455 280,458 270,440'],
            [4, '300,458 306,490 304,512 318,530 322,550 350,548 352,580 322,605 328,635 328,655 300,668 288,682 275,676 268,658 240,654 235,630 250,610 245,580 256,572 230,555 218,525 220,508 240,495'],
            [0, '314,410 330,400 370,408 395,420 385,438 358,455 345,455 335,435 318,430'],
            [0, '316,432 335,435 345,455 358,455 385,438 400,412 415,424 430,435 440,465 400,470 392,480 370,505 360,535 350,548 322,550 315,520 304,512 306,490 300,458'],
            [1, '392,480 405,500 398,540 395,590 386,615 385,650 360,670 330,655 328,635 322,605 352,580 350,548 360,535 370,505'],
            [0, '400,470 440,465 455,458 480,452 520,455 528,480 510,505 480,522 465,550 445,565 442,590 435,608 440,620 425,640 386,648 388,610 395,590 398,540 405,500 396,478'],
            [0, '430,442 470,420 505,405 505,440 500,455 480,452 455,458 440,465'],
            [0, '505,405 540,400 550,412 608,412 612,440 645,465 640,480 632,498 610,488 560,485 540,465 528,465 522,455 503,440'],
            [0, '608,412 630,402 640,408 660,395 690,400 695,388 705,395 710,415 732,440 726,460 712,465 690,455 648,465 612,440'],
            [0, '732,438 760,428 790,427 785,440 770,460 726,458'],
            [0, '528,465 540,465 560,485 610,488 632,498 636,505 645,520 632,530 630,575 600,605 592,620 610,630 612,655 590,640 570,645 540,635 490,635 484,612 460,612 440,618 435,608 442,590 445,565 465,550 480,522 510,505 528,480'],
            [3, '648,465 690,455 712,465 726,458 772,460 762,490 768,510 762,550 782,556 788,595 784,665 768,665 745,655 710,672 692,670 690,640 680,640 678,675 668,692 640,675 612,675 612,655 610,630 592,615 600,605 630,575 632,530 648,518 636,500 645,480'],
            [0, '790,430 830,432 870,445 885,465 903,468 908,500 908,555 885,570 875,590 850,585 820,592 788,595 782,556 762,550 768,510 762,490 770,460'],
            [0, '912,424 975,428 978,490 1003,535 988,570 960,598 928,602 915,580 908,556 908,500 903,468'],
            [0, '928,602 960,598 985,580 980,620 988,670 980,680 1000,700 1003,740 985,752 965,735 950,740 950,768 920,770 895,788 882,770 880,750 890,690 905,685 930,630'],
            [5, '908,556 920,580 920,600 930,630 905,685 890,690 880,750 850,748 842,770 812,758 805,740 815,715 812,685 795,665 786,655 785,598 820,592 850,586 875,590 885,570'],
            [1, '385,650 425,640 440,620 484,612 490,640 495,690 510,720 500,750 480,770 475,790 440,790 405,775 395,740 390,700'],
            [1, '490,640 540,635 570,645 612,660 612,675 640,675 658,690 668,725 662,745 648,760 620,745 580,755 575,725 545,715 530,700 498,690'],
            [0, '498,695 530,700 545,715 575,728 580,755 620,745 648,760 665,745 690,770 685,800 675,815 600,825 595,810 565,802 560,815 535,840 485,828 480,770 500,750 512,725'],
            [0, '668,692 678,675 680,640 692,645 692,670 710,672 745,655 768,665 784,668 795,670 812,690 810,730 765,735 768,760 740,785 708,795 690,770 665,745 668,722 658,690'],
            [0, '708,795 740,785 768,760 765,735 805,735 812,758 842,770 850,748 880,750 882,770 895,788 890,800 885,855 892,860 870,905 862,940 855,938 820,915 800,880 785,865 755,865 730,852 712,830'],
            [0, '985,675 1030,725 1075,765 1080,820 1095,825 1108,850 1095,870 1062,850 1045,885 1045,912 1020,908 970,900 930,870 892,860 885,800 920,775 950,768 950,740 985,752 1003,740 1000,700'],
            [3, '690,775 705,795 712,830 728,855 700,875 668,880 655,855 635,860 605,825 675,815'],
            [1, '595,810 600,830 625,850 638,880 610,930 600,990 560,1000 510,975 485,968 505,940 535,930 545,890 545,855 535,840 565,805'],
            [1, '638,880 662,905 645,935 605,940 620,905'],
            [6, '730,852 755,865 785,865 800,880 820,915 855,938 838,985 815,960 795,948 780,975 765,978 735,965 715,942 690,945 668,925 665,880 700,875'],
            [6, '690,945 715,942 735,965 738,1005 715,1010 680,1008 668,1015 665,970'],
            [4, '650,852 662,875 662,910 640,905 638,875'],
            [7, '605,940 640,935 640,975 605,975'],
            [8, '645,920 672,915 680,938 664,968 648,950'],
            [5, '650,925 664,918 668,932 655,936'],
            [3, '658,934 676,928 678,944 664,948'],
        ],
    },
    {
        transform: 'translate(1500 1780) scale(0.33333)',
        areas: [
            [1, '292,98 300,80 340,75 365,70 368,110 345,130 340,165 315,145 282,115'],
            [3, '180,68 220,88 265,100 292,95 282,115 315,145 345,165 340,190 320,215 315,235 280,245 275,262 270,240 285,210 290,170 245,160 235,142 200,145 185,180 160,130 165,90'],
            [1, '437,75 470,85 490,130 508,155 510,185 495,205 485,245 440,260 415,290 410,260 375,245 372,275 340,285 340,235 320,230 350,195 400,190 440,190 465,160 437,108'],
            [1, '368,112 400,108 437,108 465,160 440,190 400,190 370,192 345,195 340,165 345,130'],
            [1, '470,85 490,60 515,50 540,80 560,45 575,90 600,125 650,150 690,165 715,195 705,225 690,240 655,240 615,225 565,230 555,205 510,185 508,155 490,130'],
            [0, '145,210 150,190 190,180 200,145 235,142 245,160 290,170 285,205 270,240 240,265 238,230 210,205 150,215'],
            [2, '200,205 225,210 238,230 240,265 270,240 275,262 280,240 320,230 340,235 340,285 325,350 270,310 235,295 195,318 172,300 190,275 190,240'],
            [1, '340,285 372,280 375,245 410,260 415,300 445,330 480,355 500,360 485,402 460,405 415,375 330,365 325,345'],
            [0, '535,230 565,230 615,225 655,240 690,240 702,265 698,290 660,310 615,332 575,312 558,340 525,345 503,300 505,262'],
            [8, '510,183 555,205 565,228 535,230 505,260 505,300 525,350 480,355 445,328 415,305 420,270 440,252 480,258 490,215'],
            [1, '525,345 558,340 575,312 615,332 650,315 630,350 618,390 615,415 600,455 540,450 508,440 500,410 485,402 500,360'],
            [0, '460,405 485,402 505,415 508,440 538,458 515,500 485,520 478,582 465,585 460,550 430,535 418,530 412,490 380,470 410,430'],
            [0, '562,40 575,0 592,-38 630,-30 680,0 748,15 720,42 665,52 655,80 605,110 620,135 590,115 570,75'],
            [0, '605,112 655,80 665,52 720,42 748,15 755,60 775,90 770,145 735,150 715,195 690,165 620,140'],
            [0, '715,195 730,150 770,145 775,90 800,105 810,140 840,165 885,180 890,235 858,270 852,318 815,315 765,290 702,262 690,240'],
            [0, '660,310 695,292 700,330 712,390 740,405 780,425 775,455 740,455 720,435 645,445 618,412 618,380 635,340'],
            [0, '702,262 735,275 765,290 815,315 838,320 835,368 805,385 785,425 740,400 730,405 705,375 708,340 695,300'],
            [6, '540,452 600,458 618,412 645,445 640,500 635,528 600,520 555,525 545,490'],
            [3, '535,460 545,490 560,525 545,580 520,595 490,590 480,560 485,520 515,500'],
            [5, '430,535 460,550 465,585 490,588 520,598 515,620 500,630 490,650 460,650 430,662 390,640 400,590 415,545'],
            [7, '382,630 390,645 430,662 475,652 475,745 490,760 455,802 440,760 405,735 380,740 373,710 388,690'],
            [4, '478,655 500,645 520,665 515,688 538,695 540,745 535,782 490,765 475,740'],
            [0, '380,740 405,735 440,765 452,800 440,870 405,882 375,850 365,800 370,755'],
            [0, '490,765 535,782 545,830 520,860 510,872 480,860 442,870 448,825 460,800'],
            [3, '565,530 600,522 640,530 665,535 690,575 670,595 665,625 635,640 570,610 565,585 545,580'],
            [3, '540,690 570,700 620,700 632,668 640,685 650,690 645,740 620,762 590,750 545,770 538,740'],
            [2, '515,612 527,620 522,655 498,640'],
            [0, '568,620 590,620 600,635 590,650 560,640'],
            [2, '590,650 600,635 635,640 632,668 600,660'],
            [5, '525,600 548,598 548,630 525,630'],
            [5, '548,580 565,590 570,618 550,610'],
            [6, '527,632 552,632 548,655 522,650'],
            [4, '552,655 566,672 560,690 545,680'],
            [8, '520,650 545,655 540,685 515,688'],
            [9, '565,660 595,662 625,672 615,700 570,702 560,680'],
            [8, '545,640 560,645 562,662 548,660'],
            [2, '645,445 710,435 740,445 745,490 715,510 725,545 710,570 690,575 665,535 640,530 642,490'],
            [2, '835,330 858,325 865,385 878,440 870,470 830,500 825,522 775,520 765,495 745,490 740,455 780,440 785,420 805,385 835,365'],
            [0, '720,510 765,495 775,520 828,522 845,575 830,592 770,595 765,608 695,580 720,565 725,545'],
            [0, '690,578 765,605 772,625 760,665 710,672 705,698 650,690 635,640 668,625 672,592'],
            [0, '770,598 830,592 845,575 875,578 878,715 860,720 790,700 770,715 745,730 705,725 708,680 725,668 760,665 772,640'],
            [1, '650,690 705,698 705,725 740,730 790,702 800,740 795,765 760,795 720,780 705,810 640,828 625,765 645,745'],
            [1, '800,705 860,720 878,718 885,740 888,795 850,802 800,765'],
            [1, '885,725 935,715 945,760 965,780 940,830 900,850 880,845 910,815 905,795 888,790'],
            [1, '878,580 900,610 905,660 945,705 915,715 880,718'],
        ],
    },
    {
        transform: 'translate(1700 1480) scale(0.33333 0.42088)',
        areas: [
            [0, '280,78 298,70 305,110 303,180 320,195 315,255 303,265 290,300 280,320 243,310 240,280 205,265 225,240 255,220 270,185 278,150'],
            [0, '298,70 318,60 330,75 368,108 372,130 395,185 380,200 345,188 320,195 303,180 308,120'],
            [1, '320,195 345,188 380,200 400,188 418,210 430,250 415,265 362,247 340,258 315,255'],
            [1, '442,265 465,290 475,320 490,335 500,350 450,348 395,358 392,335 410,318 435,310'],
            [4, '303,265 340,258 362,247 415,265 440,258 435,310 410,320 392,340 390,358 365,370 375,392 335,402 325,380 290,380 287,350 282,320'],
            [3, '395,358 450,348 500,350 510,385 540,415 490,425 450,440 440,450 400,440 395,400 365,370'],
            [0, '80,325 130,315 165,290 205,270 240,282 243,312 282,322 287,375 280,408 245,430 235,458 180,455 110,432 150,385 152,330'],
            [0, '80,330 150,325 152,370 105,425 85,400 75,370'],
            [2, '485,430 535,418 545,440 530,432'],
            [6, '445,445 475,430 530,430 540,445 515,448 515,460 490,460'],
            [3, '400,440 445,448 490,460 555,458 550,475 470,495 425,510 415,490 387,460'],
            [2, '425,510 490,490 550,475 560,495 585,518 540,522 480,518 435,515'],
            [2, '105,430 180,455 240,458 245,430 280,408 290,380 325,380 335,402 375,392 395,405 400,440 387,460 420,505 372,535 300,535 250,542 165,520 160,490 130,470'],
            [1, '420,510 490,522 560,552 565,600 550,630 530,660 522,735 490,722 440,725 430,690 435,660 465,620 455,580 398,572 375,560 372,535'],
            [5, '485,520 540,525 585,518 580,550 568,572 555,552 520,540'],
            [4, '100,438 130,470 160,495 165,520 250,542 372,535 375,565 395,600 390,618 335,615 325,600 245,615 235,650 180,650 175,605 125,570 95,530 80,480 90,450'],
            [1, '588,518 620,550 642,585 615,605 590,612 570,605 560,580 575,560'],
            [0, '642,588 672,600 678,625 640,650 635,715 610,735 580,722 540,745 522,735 530,660 550,630 565,600 590,615 615,605'],
            [1, '680,628 700,645 740,695 700,702 635,715 635,660'],
            [1, '540,745 580,725 610,735 665,738 700,745 768,742 790,758 745,765 720,800 665,835 630,830 555,830 550,790 537,785'],
            [5, '610,738 640,715 700,702 745,698 768,712 765,740 700,745 665,738'],
            [4, '790,758 815,785 775,810 760,815 745,832 700,845 690,855 660,835 720,800 745,768'],
            [5, '775,805 815,795 838,795 825,820 790,842 775,825'],
            [1, '245,615 325,600 335,615 390,618 400,600 395,575 450,578 465,615 430,660 435,720 400,745 330,720 270,685 205,665 195,655 235,650'],
            [0, '150,690 165,675 205,685 215,668 270,685 325,710 380,730 340,775 315,780 290,770 270,745 240,755 200,795 170,785 150,735 145,720'],
            [0, '380,730 400,745 435,722 490,722 540,745 537,785 500,800 485,830 480,865 450,870 410,872 405,905 350,903 290,903 285,855 240,845 215,820 200,795 240,755 270,745 290,770 330,780'],
            [2, '270,905 290,900 350,903 405,908 390,940 385,965 355,1000 370,1050 360,1065 320,1070 278,1078 270,1010 260,960 250,955'],
            [1, '405,905 410,880 455,868 465,890 475,950 455,980 455,1000 425,1030 385,1030 390,1055 370,1060 355,1005 390,965 385,940'],
            [2, '485,865 485,835 500,800 535,788 550,800 555,850 565,880 550,930 570,975 630,990 630,1020 600,1040 575,1015 545,1030 540,1070 520,1115 480,1115 460,1100 475,1050 458,990 472,945 460,890 455,868'],
            [3, '555,832 600,825 660,835 685,860 705,915 680,940 675,985 640,995 605,980 570,972 565,942 548,932 565,900 555,865'],
            [0, '690,855 745,832 760,815 775,815 785,840 788,865 775,880 780,900 740,898 705,912'],
            [0, '705,915 740,898 775,905 825,940 830,970 820,995 800,1030 790,1065 755,1070 720,1040 660,1045 635,1020 630,995 675,985 680,940'],
            [2, '780,870 820,868 868,878 850,905 830,935 785,905'],
            [2, '812,824 826,818 832,830 820,838'],
            [1, '832,816 844,812 848,826 838,830'],
            [4, '792,842 810,836 824,846 808,856'],
            [4, '835,835 860,828 885,840 860,850 840,848'],
            [3, '790,850 810,852 850,846 885,848 868,878 825,868 815,860'],
            [2, '885,848 915,860 975,915 970,930 945,940 880,948 830,968 830,935 868,890'],
            [1, '825,968 880,948 945,945 975,935 980,980 970,1030 915,1040 870,1040 840,1020'],
            [0, '975,990 1000,980 1030,1000 1035,1030 1000,1045 970,1030'],
            [1, '895,1045 970,1035 995,1060 1000,1080 970,1112 930,1138 895,1125 912,1095'],
            [7, '995,1045 1035,1043 1038,1062 995,1062'],
            [4, '1000,1062 1035,1062 1030,1088 1060,1085 1100,1120 1060,1112 1000,1108 970,1112 1000,1085'],
            [3, '1035,1062 1058,1080 1060,1090 1030,1088'],
            [2, '1000,1112 1060,1115 1105,1125 1075,1150 1050,1160 1010,1130'],
            [5, '1060,1160 1085,1130 1105,1145 1095,1165 1075,1185'],
            [0, '590,1045 625,1020 665,1045 720,1040 752,1070 720,1100 725,1150 700,1165 650,1130 645,1100 600,1060'],
            [0, '545,1030 575,1012 585,1045 625,1070 650,1105 660,1160 590,1160 560,1135 525,1100 540,1070'],
            [0, '820,995 840,1020 895,1045 895,1065 912,1100 895,1130 830,1140 795,1190 785,1215 765,1180 715,1160 725,1100 755,1070 790,1065 800,1030'],
            [1, '320,1070 370,1060 395,1055 385,1035 425,1030 430,1005 458,1000 475,1050 460,1100 480,1115 475,1155 410,1150 405,1130 360,1125 330,1100'],
            [0, '230,1105 275,1072 320,1080 340,1110 410,1130 412,1155 350,1152 290,1165 275,1175 245,1168 230,1125'],
            [3, '280,1175 320,1155 375,1150 470,1155 430,1200 430,1230 385,1235 375,1270 345,1272 305,1235 300,1195'],
            [4, '480,1118 520,1118 560,1135 590,1162 690,1160 705,1185 665,1225 600,1230 610,1275 545,1255 520,1210 470,1160'],
            [0, '435,1185 470,1165 505,1180 520,1220 552,1275 540,1290 530,1275 465,1278 430,1250 430,1205'],
            [0, '385,1240 430,1230 435,1262 465,1275 455,1320 425,1345 385,1340 370,1325 345,1300 340,1280 380,1265'],
            [0, '670,1225 700,1170 730,1160 765,1170 780,1205 805,1225 805,1260 835,1300 840,1335 815,1310 780,1280 755,1280 700,1240'],
            [0, '605,1228 665,1228 700,1240 757,1285 745,1320 715,1345 685,1342 640,1310 610,1280'],
            [0, '550,1268 590,1275 640,1310 690,1345 660,1360 620,1370 580,1368 545,1345 540,1310 528,1295'],
            [4, '760,1278 785,1285 818,1315 775,1330 760,1365 715,1345 750,1318'],
            [2, '775,1330 818,1325 850,1340 852,1385 835,1395 820,1378 765,1372'],
            [0, '545,1345 580,1368 640,1370 690,1345 760,1378 700,1400 665,1430 635,1425 580,1400 548,1388'],
            [6, '465,1275 535,1278 530,1300 540,1330 545,1390 500,1395 440,1440 418,1430 415,1380 402,1355 430,1340 455,1315'],
            [0, '760,1378 820,1380 835,1400 815,1435 820,1470 840,1485 810,1490 790,1465 730,1458 700,1455 665,1432 700,1400'],
            [0, '500,1392 560,1390 600,1405 665,1432 700,1455 725,1465 705,1510 680,1495 600,1468 510,1455 465,1425'],
            [0, '790,1200 830,1160 835,1140 880,1125 930,1138 942,1180 935,1225 905,1228 875,1255 855,1320 840,1335 800,1265 805,1230 785,1218'],
            [1, '875,1255 905,1228 935,1228 940,1250 925,1300 930,1340 905,1345 905,1370 870,1385 852,1380 855,1320'],
            [0, '902,1345 930,1342 938,1385 905,1370'],
            [2, '835,1398 870,1385 930,1410 945,1425 930,1440 880,1445 830,1478 815,1465 825,1440 815,1432'],
            [3, '858,1388 890,1382 935,1385 925,1408 885,1400'],
            [0, '935,1145 1000,1115 1050,1160 1055,1180 1020,1205 940,1205'],
            [0, '940,1205 1025,1205 1030,1230 1025,1265 990,1250 950,1258 935,1235'],
            [3, '940,1262 990,1250 1025,1268 1050,1320 1088,1355 1060,1372 1015,1380 960,1370 930,1340 925,1310 940,1290'],
            [0, '1030,1205 1075,1185 1095,1195 1115,1225 1105,1260 1135,1290 1140,1320 1100,1345 1050,1325 1028,1260'],
            [2, '1090,1180 1110,1158 1165,1188 1175,1220 1230,1270 1215,1295 1150,1320 1138,1290 1100,1250 1112,1225 1098,1200'],
            [2, '1140,1320 1190,1310 1228,1290 1255,1310 1250,1360 1265,1395 1220,1405 1180,1440 1145,1455 1138,1430 1150,1395 1110,1355 1105,1340'],
            [0, '1020,1385 1090,1355 1110,1350 1150,1390 1138,1430 1152,1492 1110,1492 1060,1460 1020,1440'],
            [1, '935,1370 960,1372 1018,1382 1015,1405 950,1410 940,1395'],
            [0, '945,1412 1015,1405 1018,1440 990,1470 940,1462 885,1455 930,1440 945,1425'],
            [0, '250,1395 265,1382 345,1385 360,1345 370,1325 385,1340 402,1355 415,1380 418,1435 400,1442 380,1412 345,1390 310,1400 275,1418 252,1405'],
        ],
    },
];

function MapCanvas() {
    return (
        <main className="relative min-w-0 flex-1 overflow-hidden border-b-2 border-l-2 border-[#bcbcbc] bg-white">
            <svg viewBox="1400 1480 760 660" className="absolute top-[1250px] left-[726px] h-[660px] w-[760px]" role="img" aria-label="강원 지역 지도">
                <filter id="coast" x="0" y="0" width="100%" height="100%" colorInterpolationFilters="sRGB">
                    <feTurbulence type="fractalNoise" baseFrequency="0.11" numOctaves="2" seed="4" />
                    <feDisplacementMap in="SourceGraphic" scale="6" xChannelSelector="R" yChannelSelector="G" />
                </filter>
                <g filter="url(#coast)" stroke={INK} strokeWidth="1.700" strokeLinejoin="round">
                    {sheets.map((sheet) => (
                        <g key={sheet.transform} transform={sheet.transform}>
                            {sheet.areas.map(([level, points], i) => (
                                <polygon key={i} points={points} fill={FILLS[level]} vectorEffect="non-scaling-stroke" />
                            ))}
                        </g>
                    ))}
                    <path d="M1833 1555l1 1M1861 1612l2 3M1866 1621l2 4M1875 1642l3 2M1877 1658l5 7M1880 1661l5 4M1886 1665h1M1925 1738l2 3M2042 1910l2 14M2050 1932l3 3M2108 2012l4 5M2120 2058l5 4M1979 1814l4 6M1616 1786l10 6M1618 1794l8-8M1621 1784v14M1680 1992l8 10M1682 2000l9-6M1685 1990v16M1969 1826l9 5M1972 1833l6-9" fill="none" strokeWidth="2.500" />
                </g>
            </svg>
        </main>
    );
}

const menuItems = [
    { icon: 'zoomLayer', label: '레이어로 확대/축소', mnemonic: 'Z' },
    { icon: 'zoomSel', label: '선택 집합으로 확대/축소', mnemonic: 'S', disabled: true },
    { icon: 'glasses', label: '오버뷰에 표시', mnemonic: 'S' },
    { icon: 'square', label: '피처 개수 표시', mnemonic: 'C' },
    { icon: 'smallTag', label: '라벨 표시하기', mnemonic: 'L' },
    { label: '레이어 복사' },
    { label: '레이어 이름 바꾸기', mnemonic: 'n' },
    null,
    { icon: 'duplicate', label: '레이어 복제', mnemonic: 'D' },
    { icon: 'removeSquare', label: '레이어 제거', mnemonic: 'R', dots: true },
    null,
    { label: '가장 위로 이동', mnemonic: 'T' },
    { label: '가장 아래로 이동', mnemonic: 'B' },
    null,
    { icon: 'table', label: '속성 테이블 열기', mnemonic: 'A', active: true },
    { icon: 'pencil', label: '편집 모드 켜고끄기', mnemonic: 'E' },
    { label: '필터 설정', mnemonic: 'F', dots: true },
    { label: '데이터소스 변경', mnemonic: 'h', dots: true },
    null,
    { label: '레이어 축척 가시성 설정', mnemonic: 'V' },
    { label: '레이어 좌표계', submenu: true },
    null,
    { label: '내보내기', mnemonic: 'x', submenu: true },
    null,
    { label: '스타일', submenu: true },
    { label: '레이어 노트 추가', dots: true },
    { label: '속성', mnemonic: 'P', dots: true },
];

function ContextMenu() {
    return (
        <div role="menu" className="absolute top-[217px] left-[340px] w-[549px] border-2 border-[#8e8e8e] bg-white shadow-[0_14px_44px_rgba(0,0,0,0.4)]">
            {menuItems.map((item, i) => item ? (
                <button
                    key={i}
                    type="button"
                    role="menuitem"
                    disabled={item.disabled}
                    className={clsx(
                        'flex h-[54px] w-full items-center pr-2.5 pl-4 text-left whitespace-nowrap last:h-[52px]',
                        item.active && 'bg-[#9090aa] text-white outline-2 -outline-offset-2 outline-[#75759a]',
                        item.disabled && 'text-[#bbb]'
                    )}
                >
                    <span className={clsx('mr-3 flex size-[34px] items-center', item.disabled && 'opacity-40')}>
                        {item.icon && <Icon name={item.icon} className="size-[34px]" />}
                    </span>
                    <span>
                        {item.label}
                        {item.mnemonic && <> (<u className="decoration-2 underline-offset-4">{item.mnemonic}</u>)</>}
                        {item.dots && '...'}
                    </span>
                    {item.submenu && <span className="ml-auto"><Expander shown /></span>}
                </button>
            ) : (
                <div key={i} role="separator" className="mx-2.5 h-[5px]"><div className="h-0.5 bg-[#c6c6c6]" /></div>
            ))}
        </div>
    );
}

const field = 'rounded-md border-2 border-[#a6a6a6] bg-linear-to-b from-white to-[#f4f4f4] text-[26px]';

function SpinBox({ id, value }) {
    return (
        <div className={clsx('flex h-[52px] w-[209px] overflow-hidden', field)}>
            <input id={id} defaultValue={value} className="min-w-0 flex-1 bg-transparent pl-2" />
            <span className="flex w-8 flex-col items-center justify-center gap-3 border-l-2 border-[#c0c0c0]">
                <Down className="h-[9px] w-4 rotate-180" />
                <Down className="h-[9px] w-4" />
            </span>
        </div>
    );
}

function StatusBar() {
    const [render, setRender] = useState(true);
    return (
        <footer className="flex h-[74px] shrink-0 items-center bg-linear-to-b from-[#ececec] to-[#dedede] text-2xl whitespace-nowrap">
            <label className={clsx('flex h-14 w-[752px] items-center px-4', field)}>
                <svg viewBox="0 0 30 30" className="mr-4 size-7" aria-hidden="true"><path d="M20 20l9 9" stroke="#777" strokeWidth="3" /><circle cx="12" cy="12" r="9.500" fill="none" stroke="#777" strokeWidth="2.200" /></svg>
                <input aria-label="위치 검색" placeholder="위치를 찾으려면 입력하십시오 (⌘K)" className="min-w-0 flex-1 bg-transparent text-[28px] placeholder:text-[#7c7c7c]" />
            </label>
            <div className="ml-auto flex items-center">
                <label htmlFor="coord" className="mr-2">좌표</label>
                <input id="coord" defaultValue="1911134,1327370" className={clsx('h-[52px] w-[259px] text-center', field)} />
                <button type="button" aria-label="마우스 위치" className="mx-2.5">
                    <svg viewBox="0 0 36 36" className="size-9" fill="none"><rect x="8" y="0" width="14" height="24" rx="7" transform="rotate(-30 15 12)" fill="#fff" stroke="#111" strokeWidth="2.500" /><path d="M7 7l15 18M12 3l16 20M5 15l15-12" stroke="#111" strokeWidth="2" /><circle cx="24" cy="26" r="7" fill="#fff" stroke="#111" strokeWidth="3" /><circle cx="24" cy="26" r="2" fill="#111" /><path d="M26 6l6-4M28 10h6M2 24l4 2" stroke="#111" strokeWidth="2" /></svg>
                </button>
                <label htmlFor="scale" className="mr-1 ml-5">축척</label>
                <div className={clsx('grid h-14 w-[209px] overflow-hidden', field)}>
                    <select id="scale" className="appearance-none bg-transparent pl-1 [grid-area:1/1]"><option>1:1837591</option></select>
                    <span className="pointer-events-none flex w-11 items-center justify-center justify-self-end border-l-2 border-[#c0c0c0] [grid-area:1/1]"><Down className="h-[9px] w-4" /></span>
                </div>
                <button type="button" aria-label="축척 잠금" className="mr-5 ml-7">
                    <svg viewBox="0 0 28 36" className="h-9 w-7"><path d="M6 18V9c0-11 16-11 16 0v9" fill="none" stroke="#999" strokeWidth="3" /><rect x="1" y="16" width="26" height="19" rx="2" fill="#606060" /></svg>
                </button>
                <label htmlFor="magnifier" className="mr-2">확대경</label>
                <SpinBox id="magnifier" value="100%" />
                <label htmlFor="rotation" className="mx-5">회전</label>
                <SpinBox id="rotation" value="0.0 °" />
                <span className="mr-2.5 ml-3.5 flex"><CheckBox id="render" checked={render} onChange={() => setRender(!render)} /></span>
                <label htmlFor="render">렌더링</label>
                <button type="button" className="ml-9 flex items-center text-[26px]">
                    <svg viewBox="0 0 34 34" className="mr-1 size-[34px]" fill="none" stroke="#666" strokeWidth="2"><circle cx="17" cy="17" r="14" /><ellipse cx="17" cy="17" rx="7" ry="14" /><path d="M17 3v28M1 17h32M4 10h26M4 24h26" /></svg>
                    EPSG:5179
                </button>
                <button type="button" aria-label="메시지" className="mr-[60px] ml-[52px]">
                    <svg viewBox="0 0 38 36" className="h-9 w-[38px]"><path d="M19 1c23 0 23 26 9 28l6 6c-6 0-10-2-13-6C-5 30-5 1 19 1z" fill="#636363" /></svg>
                </button>
            </div>
        </footer>
    );
}

export default function App() {
    return (
        <div className="relative flex h-screen flex-col overflow-hidden bg-[#ececec] pl-1 font-['Inter','Noto_Sans_CJK_KR',sans-serif] text-[28px] leading-9 text-[#222]">
            <svg className="absolute size-0" aria-hidden="true">
                <linearGradient id="blue" x1="0" y1="0" x2="1" y2="1"><stop stopColor="#8fc0ee" /><stop offset="1" stopColor="#2f6fae" /></linearGradient>
                <linearGradient id="blueSoft" x1="0" y1="0" x2="1" y2="1"><stop stopColor="#dbe8f4" /><stop offset="1" stopColor="#5f93c4" /></linearGradient>
                <linearGradient id="glass" x1="0" y1="0" x2="1" y2="1"><stop stopColor="#fafafa" /><stop offset="1" stopColor="#d2d2d2" /></linearGradient>
            </svg>

            <header className="grid h-[55px] shrink-0 grid-cols-3 items-start border-b-2 border-[#d8d0cc] bg-[#fff4ee]">
                <div className="flex gap-[18px] pt-[9px] pl-[9px]">
                    <button type="button" aria-label="닫기" className="size-[27px] rounded-full bg-[#ff5f57]" />
                    <button type="button" aria-label="최소화" className="size-[27px] rounded-full bg-[#febc2e]" />
                    <button type="button" aria-label="최대화" className="size-[27px] rounded-full bg-[#28c840]" />
                </div>
                <h1 className="pt-1 text-center text-[28px] font-bold text-[#444]">*2023 강원클러스터현황 — QGIS</h1>
            </header>

            <Toolbar groups={mainTools} more />
            <Toolbar groups={layerTools} trailing />

            <div className="flex min-h-0 flex-1">
                <aside className="mr-3.5 flex w-[655px] shrink-0 flex-col border-r-2 border-[#bcbcbc]">
                    <BrowserPanel />
                    <LayersPanel />
                </aside>
                <MapCanvas />
            </div>

            <StatusBar />
            <div className="-ml-1 h-[3px] shrink-0 bg-linear-to-r from-[#1d5a96] from-15% via-[#96501e] via-30% to-[#b83210]" />

            <ContextMenu />
            <div className="pointer-events-none absolute top-[790px] left-[305px] h-[133px] w-[620px] rounded-2xl border-[23px] border-[#ff0000]" />
        </div>
    );
}
